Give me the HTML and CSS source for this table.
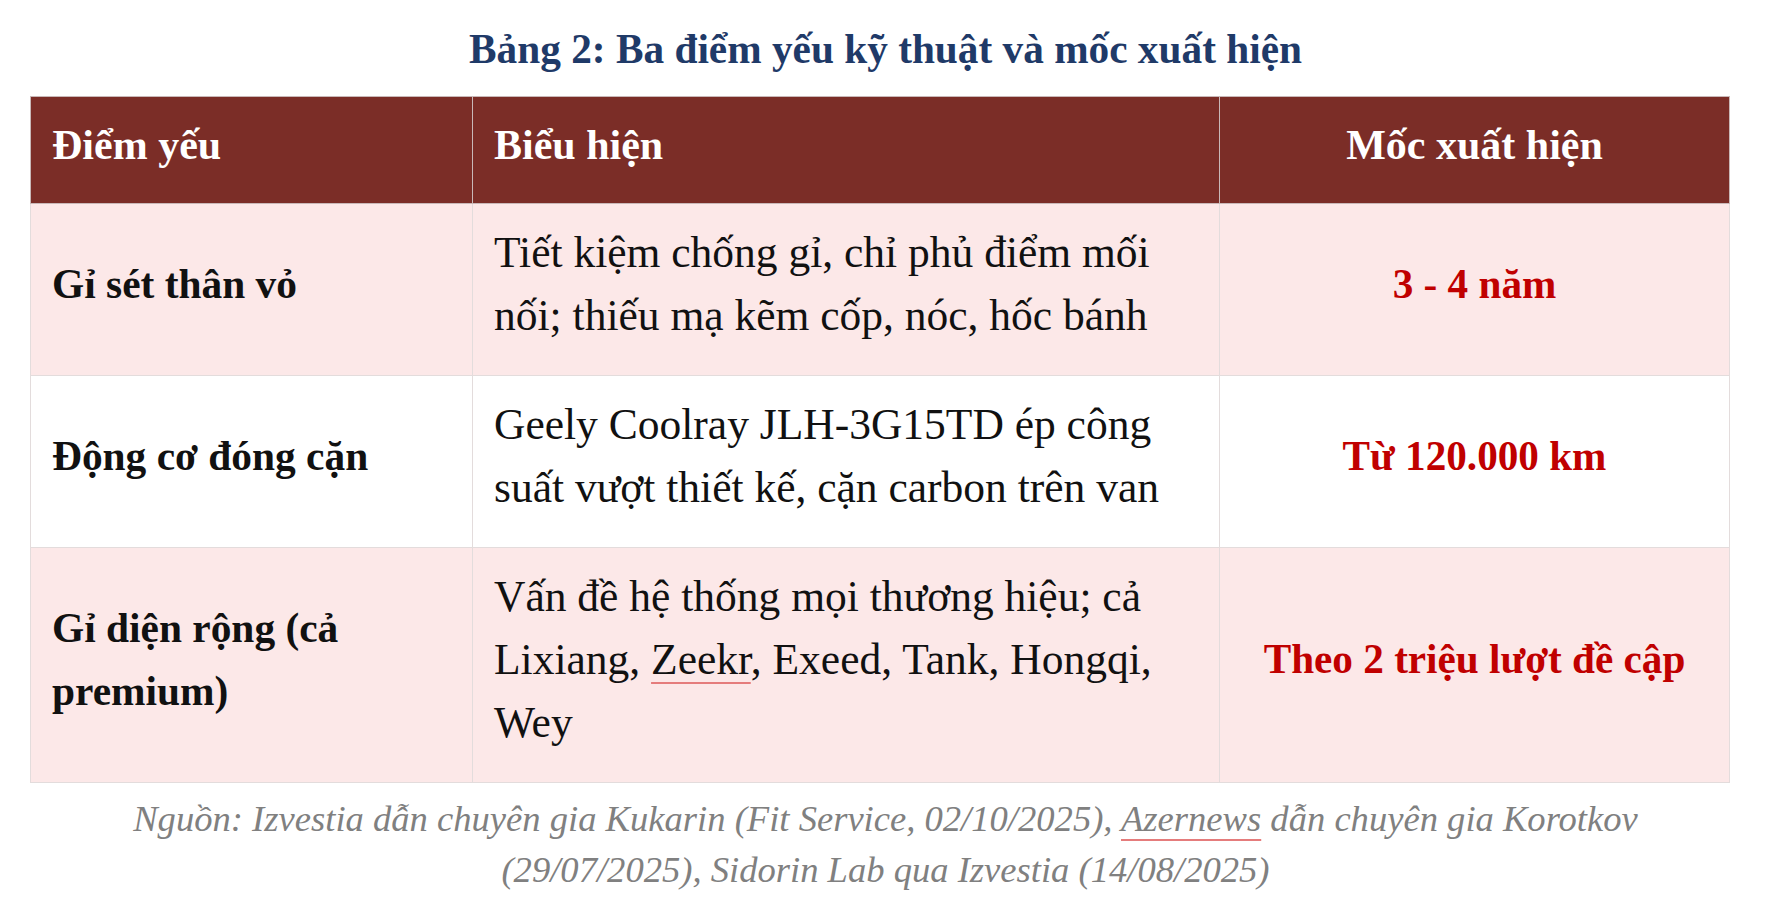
FILE: index.html
```html
<!DOCTYPE html>
<html lang="vi">
<head>
<meta charset="utf-8">
<title>Bảng 2</title>
<link rel="stylesheet" href="styles.css">
</head>
<body>
<div class="page">
  <h2 class="title">Bảng 2: Ba điểm yếu kỹ thuật và mốc xuất hiện</h2>
  <table class="tbl">
    <colgroup>
      <col class="c1"><col class="c2"><col class="c3">
    </colgroup>
    <thead>
      <tr>
        <th>Điểm yếu</th>
        <th>Biểu hiện</th>
        <th class="center">Mốc xuất hiện</th>
      </tr>
    </thead>
    <tbody>
      <tr class="pink">
        <td class="name">Gỉ sét thân vỏ</td>
        <td>Tiết kiệm chống gỉ, chỉ phủ điểm mối nối; thiếu mạ kẽm cốp, nóc, hốc bánh</td>
        <td class="when">3 - 4 năm</td>
      </tr>
      <tr>
        <td class="name">Động cơ đóng cặn</td>
        <td>Geely Coolray JLH-3G15TD ép công suất vượt thiết kế, cặn carbon trên van</td>
        <td class="when">Từ 120.000 km</td>
      </tr>
      <tr class="pink">
        <td class="name">Gỉ diện rộng (cả premium)</td>
        <td>Vấn đề hệ thống mọi thương hiệu; cả Lixiang, <a class="lnk" href="#">Zeekr</a>, Exeed, Tank, Hongqi, Wey</td>
        <td class="when">Theo 2 triệu lượt đề cập</td>
      </tr>
    </tbody>
  </table>
  <p class="caption">Nguồn: Izvestia dẫn chuyên gia Kukarin (Fit Service, 02/10/2025), <a class="lnk" href="#">Azernews</a> dẫn chuyên gia Korotkov (29/07/2025), Sidorin Lab qua Izvestia (14/08/2025)</p>
</div>
</body>
</html>
```
FILE: styles.css
```css
html, body {
  margin: 0;
  padding: 0;
  background: #ffffff;
}

body {
  font-family: "Liberation Serif", "Times New Roman", serif;
  color: #111111;
}

.page {
  padding: 23px 24px 0 30px;
}

.title {
  margin: 0;
  text-align: center;
  font-size: 41.3px;
  line-height: 52px;
  font-weight: bold;
  color: #1f3a68;
}

.tbl {
  margin-top: 21px;
  width: 1699px;
  border-collapse: collapse;
  table-layout: fixed;
  font-size: 43.5px;
  line-height: 63px;
}

.c1 { width: 442px; }
.c2 { width: 747px; }
.c3 { width: 510px; }

.tbl th,
.tbl td {
  border: 1px solid #e3dcdc;
  padding: 17px 21px 28px;
  vertical-align: middle;
  text-align: left;
}

.tbl th {
  background: #7b2d27;
  color: #ffffff;
  font-weight: bold;
  font-size: 42px;
  border-color: #c9b8b8;
  padding-bottom: 26px;
}

.tbl th.center {
  text-align: center;
}

.tbl tbody tr {
  background: #ffffff;
}

.tbl tbody tr.pink {
  background: #fce8e8;
}

.tbl td.name {
  font-weight: bold;
  font-size: 41.4px;
  color: #111111;
}

.tbl td.when {
  text-align: center;
  font-weight: bold;
  font-size: 41.2px;
  color: #c00000;
}

.lnk {
  color: inherit;
  text-decoration: underline;
  text-decoration-color: #e57c7c;
  text-decoration-thickness: 2px;
  text-underline-offset: 8px;
}

.caption {
  margin: 10px 0 0;
  padding: 0 40px;
  text-align: center;
  font-style: italic;
  font-size: 36.6px;
  line-height: 51px;
  color: #808080;
}
```
